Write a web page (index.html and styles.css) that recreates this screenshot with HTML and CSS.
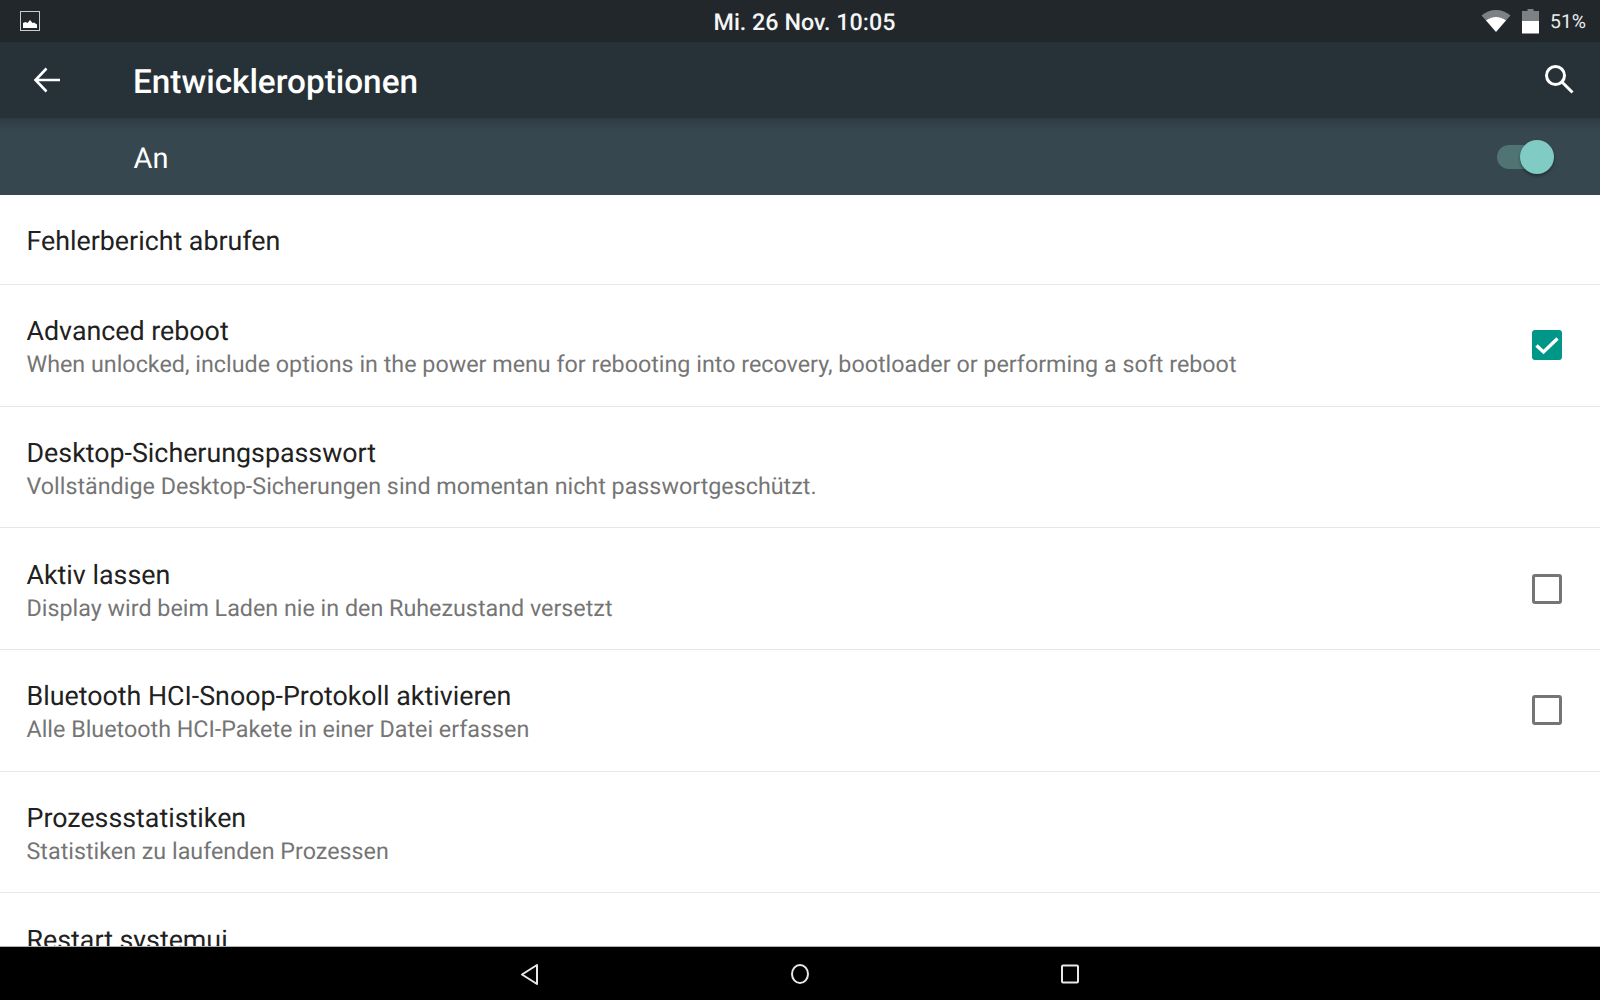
FILE: index.html
```html
<!DOCTYPE html>
<html lang="de">
<head>
    <meta charset="UTF-8">
    <meta name="viewport" content="width=device-width, initial-scale=1.0">
    <title>Entwickleroptionen</title>
    <link rel="stylesheet" href="styles.css">
</head>
<body>
    <header class="status-bar">
        <div class="status-left">
            <svg class="status-picture" width="20" height="20" viewBox="0 0 20 20">
                <rect x="0.5" y="0.5" width="19" height="19" fill="none" stroke="#c9cbcc" stroke-width="1"/>
                <path d="M3 17v-5l2.500-1 2 1 2.500-3 2.500 3 1.500-.5 3 2V17z" fill="#fff"/>
            </svg>
        </div>
        <div class="status-clock">Mi. 26 Nov. 10:05</div>
        <div class="status-right">
            <svg class="status-wifi" width="30" height="24" viewBox="0 0 30 24">
                <path d="M0.500 6.500C4.500 3 9.500 1 15 1s10.500 2 14.500 5.500L24.500 12H5.500z" fill="#7d8183"/>
                <path d="M5 11.500C8 9.200 11.300 8 15 8s7 1.200 10 3.500L15 23z" fill="#fff"/>
            </svg>
            <svg class="status-battery" width="18" height="25" viewBox="0 0 18 25">
                <path d="M5.500 0h6v2H17v10H0V2h5.500z" fill="#7d8183"/>
                <rect x="0" y="12" width="17" height="12.500" fill="#fff"/>
            </svg>
            <span class="status-level">51%</span>
        </div>
    </header>

    <div class="toolbar">
        <button class="icon-button back-button">
            <svg width="30" height="30" viewBox="0 0 30 30">
                <path d="M28 15H4M14.500 3.500 3.500 15l11 11.500" fill="none" stroke="#fff" stroke-width="2.600"/>
            </svg>
        </button>
        <h1 class="toolbar-title">Entwickleroptionen</h1>
        <button class="icon-button search-button">
            <svg width="32" height="32" viewBox="0 0 32 32">
                <circle cx="12.500" cy="12.500" r="9" fill="none" stroke="#fff" stroke-width="3"/>
                <path d="M19 19l10.500 10.500" fill="none" stroke="#fff" stroke-width="3"/>
            </svg>
        </button>
    </div>

    <div class="switch-bar">
        <span class="switch-label">An</span>
        <div class="switch">
            <div class="switch-track"></div>
            <div class="switch-thumb"></div>
        </div>
    </div>

    <main class="pref-list">
        <div class="pref pref-single">
            <div class="pref-text">
                <div class="pref-title">Fehlerbericht abrufen</div>
            </div>
        </div>
        <div class="pref">
            <div class="pref-text">
                <div class="pref-title">Advanced reboot</div>
                <div class="pref-summary">When unlocked, include options in the power menu for rebooting into recovery, bootloader or performing a soft reboot</div>
            </div>
            <div class="checkbox checked">
                <svg width="30" height="30" viewBox="0 0 30 30">
                    <path d="M4.500 15.500l7 6.500L25.500 8.500" fill="none" stroke="#fff" stroke-width="3.400"/>
                </svg>
            </div>
        </div>
        <div class="pref">
            <div class="pref-text">
                <div class="pref-title">Desktop-Sicherungspasswort</div>
                <div class="pref-summary">Vollständige Desktop-Sicherungen sind momentan nicht passwortgeschützt.</div>
            </div>
        </div>
        <div class="pref">
            <div class="pref-text">
                <div class="pref-title">Aktiv lassen</div>
                <div class="pref-summary">Display wird beim Laden nie in den Ruhezustand versetzt</div>
            </div>
            <div class="checkbox"></div>
        </div>
        <div class="pref">
            <div class="pref-text">
                <div class="pref-title">Bluetooth HCI-Snoop-Protokoll aktivieren</div>
                <div class="pref-summary">Alle Bluetooth HCI-Pakete in einer Datei erfassen</div>
            </div>
            <div class="checkbox"></div>
        </div>
        <div class="pref">
            <div class="pref-text">
                <div class="pref-title">Prozessstatistiken</div>
                <div class="pref-summary">Statistiken zu laufenden Prozessen</div>
            </div>
        </div>
        <div class="pref">
            <div class="pref-text">
                <div class="pref-title">Restart systemui</div>
                <div class="pref-summary pref-summary-empty"></div>
            </div>
        </div>
    </main>

    <nav class="nav-bar">
        <svg width="22" height="24" viewBox="0 0 22 24">
            <path d="M18 3 3 12.500 18 22z" fill="none" stroke="#e8e8e8" stroke-width="2" stroke-linejoin="round"/>
        </svg>
        <svg width="22" height="24" viewBox="0 0 22 24">
            <ellipse cx="11" cy="12" rx="8" ry="9" fill="none" stroke="#e8e8e8" stroke-width="2"/>
        </svg>
        <svg width="22" height="24" viewBox="0 0 22 24">
            <rect x="3" y="3.500" width="16" height="17" rx="1" fill="none" stroke="#e8e8e8" stroke-width="2"/>
        </svg>
    </nav>
</body>
</html>
```

FILE: styles.css
```css
html, body {
    margin: 0;
    height: 100%;
    overflow: hidden;
}
body {
    display: flex;
    flex-direction: column;
    font-family: Roboto, "Noto Sans", sans-serif;
    text-rendering: geometricPrecision;
    background-color: #fff;
}
.status-bar {
    flex: 0 0 42px;
    display: flex;
    align-items: center;
    justify-content: space-between;
    background-color: #21272b;
    color: #fff;
    position: relative;
}
.status-left {
    padding-left: 20px;
    display: flex;
}
.status-clock {
    position: absolute;
    left: 0;
    right: 0;
    padding: 2px 0 0 9px;
    text-align: center;
    font-size: 23.300px;
    font-weight: 500;
    color: #f4f5f5;
}
.status-right {
    display: flex;
    align-items: center;
    padding-right: 14px;
}
.status-wifi {
    margin-right: 11px;
}
.status-battery {
    margin-right: 10px;
}
.status-level {
    font-size: 19.400px;
    color: #eceded;
}
.toolbar {
    flex: 0 0 76px;
    display: flex;
    align-items: center;
    background-color: #263238;
    color: #fff;
    box-sizing: border-box;
}
.icon-button {
    background: none;
    border: none;
    padding: 0;
    display: flex;
}
.back-button {
    margin-left: 32px;
}
.toolbar-title {
    margin: 0 0 0 71px;
    padding-top: 5px;
    flex: 1;
    font-size: 33.300px;
    font-weight: 500;
}
.search-button {
    margin-right: 25px;
    margin-bottom: 2px;
}
.switch-bar {
    flex: 0 0 77px;
    display: flex;
    align-items: center;
    justify-content: space-between;
    background: linear-gradient(#2e3a41, #37474f 12px);
    padding: 0 46px 0 133.500px;
}
.switch-label {
    color: #fff;
    font-size: 29px;
    padding-top: 4px;
}
.switch {
    position: relative;
    width: 57px;
    height: 34px;
}
.switch-track {
    position: absolute;
    left: 0;
    top: 5px;
    width: 50px;
    height: 24px;
    border-radius: 12px;
    background-color: #4f7473;
}
.switch-thumb {
    position: absolute;
    right: 0;
    top: 0;
    width: 34px;
    height: 34px;
    border-radius: 50%;
    background-color: #80cbc4;
    box-shadow: 0 2px 3px rgba(0, 0, 0, 0.35);
}
.pref-list {
    flex: 1;
    min-height: 0;
    overflow: hidden;
}
.pref {
    height: 121.670px;
    box-sizing: border-box;
    display: flex;
    align-items: center;
    justify-content: space-between;
    padding: 0 38px 0 26.500px;
    border-bottom: 1px solid #e7e7e7;
}
.pref-single {
    height: 90px;
}
.pref-text {
    padding-top: 4px;
}
.pref-single .pref-text {
    padding-top: 2px;
}
.pref-title {
    font-size: 26.800px;
    line-height: 34px;
    color: #212121;
}
.pref-summary {
    font-size: 23.300px;
    line-height: 32px;
    color: #757575;
}
.pref-summary-empty {
    height: 32px;
}
.checkbox {
    width: 30px;
    height: 30px;
    box-sizing: border-box;
    border: 3px solid #757575;
    border-radius: 3px;
    display: flex;
}
.checkbox.checked {
    border: none;
    background-color: #009688;
}
.nav-bar {
    flex: 0 0 54px;
    display: flex;
    justify-content: center;
    align-items: center;
    gap: 248px;
    background-color: #000;
    border-top: 1px solid #b0b0b0;
    box-sizing: border-box;
}
```
